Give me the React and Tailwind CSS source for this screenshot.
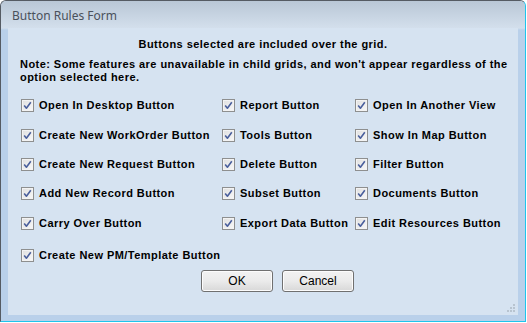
import React from "react";

const col1 = [
  "Open In Desktop Button",
  "Create New WorkOrder Button",
  "Create New Request Button",
  "Add New Record Button",
  "Carry Over Button",
  "Create New PM/Template Button",
];
const col2 = ["Report Button", "Tools Button", "Delete Button", "Subset Button", "Export Data Button"];
const col3 = ["Open In Another View", "Show In Map Button", "Filter Button", "Documents Button", "Edit Resources Button"];
const heights = ["h-[30px]", "h-[30px]", "h-[29px]", "h-[29px]", "h-[31px]", "h-[32px]"];

function Check({ label }) {
  return (
    <div className="flex items-center gap-[5px]">
      <div className="w-[13px] h-[13px] border border-[#8e8f8f] bg-gradient-to-br from-[#dcdcdc] to-[#fbfbfb] flex items-center justify-center">
        <div className="w-[11px] h-[11px] border border-[#f3f3f3] flex items-center justify-center bg-gradient-to-br from-[#e2e2e2] to-[#f6f6f6]">
          <svg width="9" height="9" viewBox="0 0 9 9">
            <path d="M1.2 4.6 L3.4 7.2 L7.8 1.2" stroke="#4a5f9c" strokeWidth="1.6" fill="none" strokeLinejoin="round" />
          </svg>
        </div>
      </div>
      <span className="whitespace-nowrap">{label}</span>
    </div>
  );
}

function Btn({ children }) {
  return (
    <div className="w-[72px] h-[22px] rounded-[3px] border border-[#707070] bg-gradient-to-b from-[#f2f2f2] via-[#ebebeb] to-[#d8d8d8] flex items-center justify-center text-black font-normal tracking-normal text-[12px] shadow-[inset_0_0_0_1px_#fcfcfc]">
      {children}
    </div>
  );
}

export default function App() {
  const rows = [0, 1, 2, 3, 4, 5];
  return (
    <div className="w-[527px] h-[323px] bg-white">
      <div className="w-[526px] h-[322px] rounded-t-[6px] border border-[#555b63] border-b-[#1fc4ec] border-r-[#1fc4ec] bg-[#b9d0ea] flex flex-col overflow-hidden">
        <div className="h-[27px] bg-gradient-to-b from-[#b9c7d6] to-[#d3dfec] flex items-center pl-[11px] pt-[3px] shrink-0">
          <span className="text-[12px] text-[#4a515b]" style={{ fontFamily: '"Segoe UI", "Noto Sans", sans-serif' }}>
            Button Rules Form
          </span>
        </div>
        <div className="flex-1 px-[7px] pb-[6px] pt-0 flex bg-gradient-to-b from-[#d3dfec] to-[#b9d0ea] to-[2px]">
          <div
            className="relative flex-1 bg-[#d6e3f1] flex flex-col text-[11px] font-bold text-black leading-[13px] tracking-[0.45px]"
            style={{ fontFamily: '"Liberation Sans", Arial, sans-serif' }}
          >
            <div className="text-center mt-[10px]">Buttons selected are included over the grid.</div>
            <div className="mt-[7px] pl-[12px] pr-[4px]">
              Note: Some features are unavailable in child grids, and won't appear regardless of the option selected here.
            </div>
            <div className="mt-[6px] pl-[13px] flex flex-col">
              {rows.map((i) => (
                <div key={i} className={`flex items-center ${heights[i]}`}>
                  <div className="w-[201px]">
                    <Check label={col1[i]} />
                  </div>
                  <div className="w-[133px]">{col2[i] && <Check label={col2[i]} />}</div>
                  <div>{col3[i] && <Check label={col3[i]} />}</div>
                </div>
              ))}
            </div>
            <div className="flex gap-[9px] pl-[193px] mt-[-1px]">
              <Btn>OK</Btn>
              <Btn>Cancel</Btn>
            </div>
            <svg className="absolute right-[3px] bottom-[3px]" width="8" height="8" viewBox="0 0 8 8">
              <rect x="6" y="0" width="2" height="2" fill="#b8c4d0" />
              <rect x="3" y="3" width="2" height="2" fill="#b8c4d0" />
              <rect x="6" y="3" width="2" height="2" fill="#b8c4d0" />
              <rect x="0" y="6" width="2" height="2" fill="#b8c4d0" />
              <rect x="3" y="6" width="2" height="2" fill="#b8c4d0" />
              <rect x="6" y="6" width="2" height="2" fill="#b8c4d0" />
            </svg>
          </div>
        </div>
      </div>
    </div>
  );
}
